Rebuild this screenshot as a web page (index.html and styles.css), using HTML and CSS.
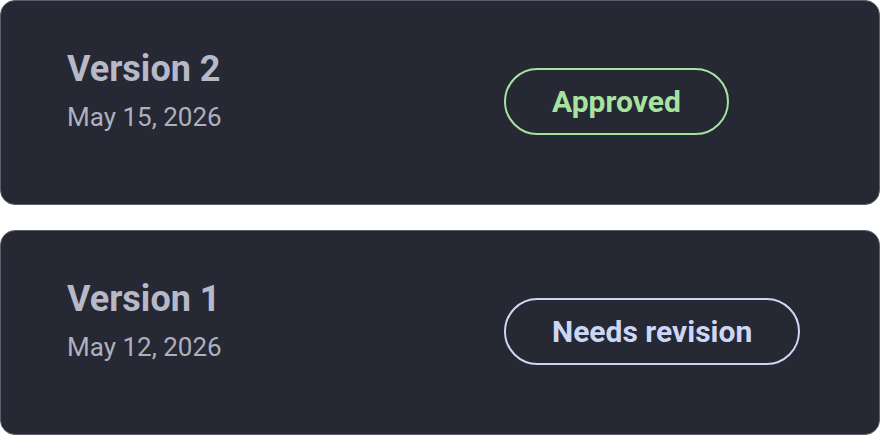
FILE: index.html
```html
<!DOCTYPE html>
<html>
<head>
<meta charset="utf-8">
<link rel="stylesheet" href="styles.css">
</head>
<body>
<div class="list">
  <div class="card">
    <div class="info">
      <div class="title">Version 2</div>
      <div class="date">May 15, 2026</div>
    </div>
    <div class="badge approved">Approved</div>
  </div>
  <div class="card">
    <div class="info">
      <div class="title">Version 1</div>
      <div class="date">May 12, 2026</div>
    </div>
    <div class="badge revision">Needs revision</div>
  </div>
</div>
</body>
</html>
```
FILE: styles.css
```css
html, body {
  margin: 0;
  padding: 0;
  background: #ffffff;
}
body {
  font-family: Roboto, "Liberation Sans", sans-serif;
}
.list {
  display: flex;
  flex-direction: column;
  gap: 25px;
}
.card {
  box-sizing: border-box;
  height: 205px;
  background: #262833;
  border: 1px solid #5b5e6b;
  border-radius: 15px;
  display: flex;
  align-items: flex-start;
  padding: 46px 66px 0 66px;
}
.info {
  flex: 0 0 437px;
}
.title {
  font-size: 36px;
  line-height: 44px;
  font-weight: 700;
  color: #b6b9c7;
}
.date {
  margin-top: 8px;
  font-size: 26px;
  line-height: 36px;
  color: #adb0be;
}
.badge {
  margin-top: 21px;
  height: 67px;
  box-sizing: border-box;
  line-height: 63px;
  padding: 0 46px;
  border: 2px solid;
  border-radius: 34px;
  font-size: 30px;
  font-weight: 700;
  white-space: nowrap;
}
.approved {
  color: #a6e3a1;
  border-color: #a6e3a1;
}
.revision {
  color: #cdd6f4;
  border-color: #cdd6f4;
}
```
